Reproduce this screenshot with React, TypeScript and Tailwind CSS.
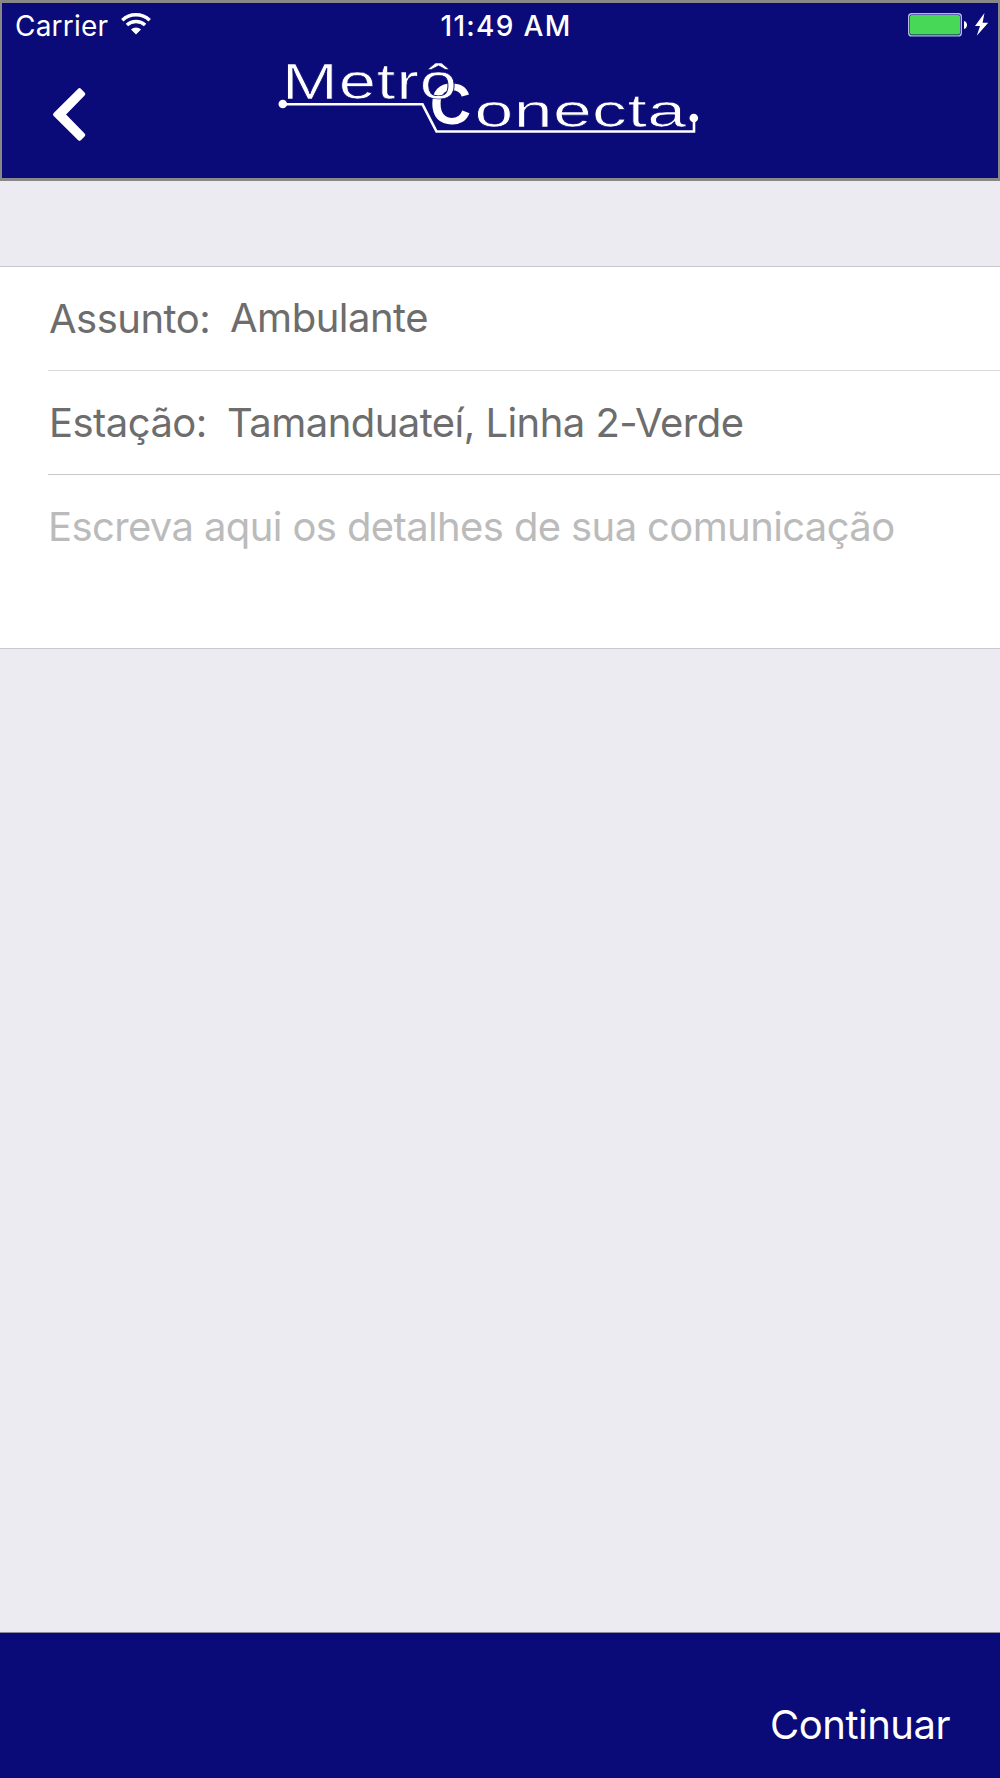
import React from 'react';

function WifiIcon() {
  return (
    <svg className="ml-[12px] mt-[9px] h-[24px] w-[32px]" viewBox="0 0 32 24" fill="none">
      <path d="M2.3 8.2C9.8 1 22 1 29.7 8.2" stroke="#fff" strokeWidth="3.4" />
      <path d="M6.9 13C12 8.3 20 8.3 25.1 13" stroke="#fff" strokeWidth="3.4" />
      <path d="M11 17.5c2.9-2.7 7.1-2.7 10 0l-5 5z" fill="#fff" />
    </svg>
  );
}

function BatteryIcon() {
  return (
    <svg className="mt-[7px] h-[30px] w-[84px]" viewBox="0 0 84 30" fill="none">
      <rect x="1.7" y="3.7" width="52.6" height="22.2" rx="3" stroke="#b9b9e4" strokeWidth="1.4" />
      <rect x="3" y="5" width="50" height="19.6" rx="1.6" fill="#46d856" />
      <path d="M57 11c4 .8 4 7.2 0 8z" fill="#fff" />
      <path d="M77.5 3 68 16h5l-3.2 9.8L81.2 12.8h-5.6z" fill="#fff" />
    </svg>
  );
}

function StatusBar() {
  return (
    <div className="grid h-[48px] grid-cols-3 text-[28px] leading-[46px] text-white">
      <div className="flex pl-[13px]">
        <span className="tracking-[0.2px]">Carrier</span>
        <WifiIcon />
      </div>
      <div className="pl-[12px] text-center font-medium tracking-[1.3px]">11:49 AM</div>
      <div className="flex justify-end pr-[7px]">
        <BatteryIcon />
      </div>
    </div>
  );
}

function Logo() {
  return (
    <svg className="h-[84px] w-[430px]" viewBox="274 54 430 84" fill="none">
      <g fill="#fff" fontFamily="'Liberation Sans', sans-serif">
        <text transform="translate(430 124)" fontSize="57" fontWeight="700" textLength="41" lengthAdjust="spacingAndGlyphs">C</text>
        <text transform="translate(282 98.800) scale(1.35 1)" fontSize="49.500" textLength="129.500" lengthAdjust="spacing" stroke="#0a0a78" strokeWidth="0.7">Metrô</text>
        <text transform="translate(474.500 127.200) scale(1.5 1)" fontSize="46.500" textLength="141" lengthAdjust="spacing" stroke="#0a0a78" strokeWidth="0.7">onecta</text>
      </g>
      <path d="M283 104.300H422.500L436.500 131.500H694V118" stroke="#fff" strokeWidth="2.6" />
      <circle cx="282.800" cy="104" r="4.300" fill="#fff" />
      <circle cx="693.800" cy="118" r="4.300" fill="#fff" />
    </svg>
  );
}

function Header() {
  return (
    <header className="h-[181px] border-x-2 border-y-[3px] border-[#888888] bg-[#0a0a78]">
      <StatusBar />
      <div className="flex items-start">
        <button className="ml-[50px] mt-[35px]" aria-label="Voltar">
          <svg className="h-[56px] w-[36px]" viewBox="0 0 36 56">
            <path d="M27.500 4.500 3.300 28.500 27.500 52.500 31 49 11 28.500 31 8z" fill="#fff" stroke="#fff" strokeWidth="4.500" strokeLinejoin="round" />
          </svg>
        </button>
        <div className="ml-[186px] mt-[3px]">
          <Logo />
        </div>
      </div>
    </header>
  );
}

function Form() {
  return (
    <section className="mt-[85px] h-[383px] border-y border-[#c8c8cc] bg-white pl-[48px] text-[40px] leading-[48px] text-[#6d6d6d]">
      <div className="flex h-[104px] border-b border-[#dcdcde] pl-px pt-[28px] tracking-[-0.5px]">
        <span className="w-[181px]">Assunto:</span>
        <span className="-mt-px">Ambulante</span>
      </div>
      <div className="flex h-[104px] border-b border-[#c8c8cc] pt-[28px] tracking-[-0.55px]">
        <span className="w-[179px] pl-px">Estação:</span>
        <span>Tamanduateí, Linha 2-Verde</span>
      </div>
      <div className="pt-[28px] tracking-[-0.62px] text-[#bbbbbb]">Escreva aqui os detalhes de sua comunicação</div>
    </section>
  );
}

export default function App() {
  return (
    <div className="flex h-[1778px] w-[1000px] flex-col overflow-hidden bg-[#ebebf1] font-['Inter',sans-serif]">
      <Header />
      <Form />
      <footer className="mt-auto flex h-[146px] justify-end border-t border-[#8a8a9c] bg-[#0a0a78] pr-[50px] pt-[68px]">
        <button className="h-[48px] text-[40px] leading-[48px] tracking-[-0.5px] text-white">Continuar</button>
      </footer>
    </div>
  );
}
